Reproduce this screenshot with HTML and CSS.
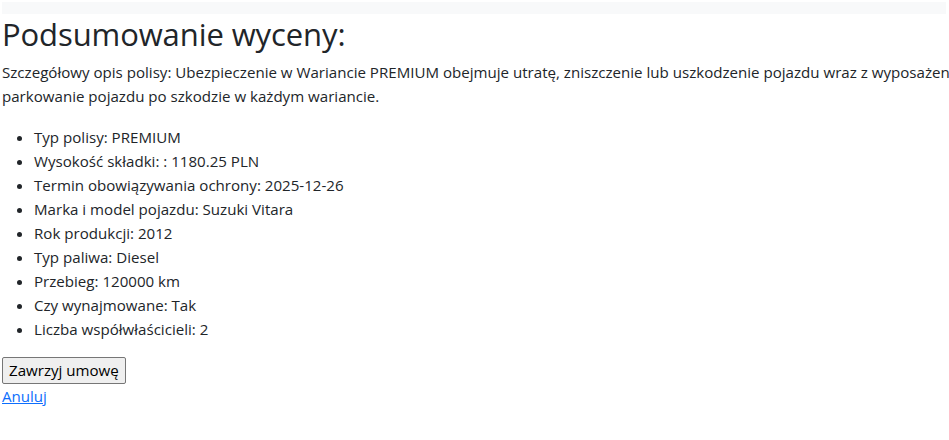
FILE: index.html
```html
<!DOCTYPE html>
<html lang="pl">
<head>
<meta charset="utf-8">
<title>Podsumowanie wyceny</title>
<link rel="stylesheet" href="styles.css">
</head>
<body>
<div class="topbar"></div>
<main class="content">
  <h1 class="title">Podsumowanie wyceny:</h1>
  <p class="desc">Szczegółowy opis polisy: Ubezpieczenie w Wariancie PREMIUM obejmuje utratę, zniszczenie lub uszkodzenie pojazdu wraz z wyposażeniem oraz holowanie i<br>parkowanie pojazdu po szkodzie w każdym wariancie.</p>
  <ul class="details">
    <li>Typ polisy: PREMIUM</li>
    <li>Wysokość składki: : 1180.25 PLN</li>
    <li>Termin obowiązywania ochrony: 2025-12-26</li>
    <li>Marka i model pojazdu: Suzuki Vitara</li>
    <li>Rok produkcji: 2012</li>
    <li>Typ paliwa: Diesel</li>
    <li>Przebieg: 120000 km</li>
    <li>Czy wynajmowane: Tak</li>
    <li>Liczba współwłaścicieli: 2</li>
  </ul>
  <button class="btn" type="button">Zawrzyj umowę</button>
  <div class="cancel"><a href="#" class="cancel-link">Anuluj</a></div>
</main>
</body>
</html>
```
FILE: styles.css
```css
html, body {
  margin: 0;
  overflow: hidden;
  background: #fff;
}
body {
  padding: 2px;
  font-family: "Open Sans", "Noto Sans", sans-serif;
  font-size: 15.1px;
  line-height: 24px;
  color: #212529;
}
.topbar {
  height: 12px;
  background: #f8f9fa;
  width: 944px;
}
.title {
  margin: 0 0 5px;
  font-size: 31px;
  line-height: 41px;
  font-weight: 400;
  letter-spacing: -0.1px;
}
.desc {
  margin: 0 0 17px;
  white-space: nowrap;
}
.details {
  margin: 0 0 16px;
  padding-left: 32px;
}
.btn {
  display: block;
  font-family: inherit;
  font-size: 15.1px;
  line-height: 23px;
  color: #000;
  background: #efefef;
  border: 1px solid #767676;
  border-radius: 2px;
  padding: 1px 6px;
  margin: 0;
}
.cancel {
  line-height: 24px;
}
.cancel-link {
  color: #0d6efd;
  text-decoration: underline;
}
```
